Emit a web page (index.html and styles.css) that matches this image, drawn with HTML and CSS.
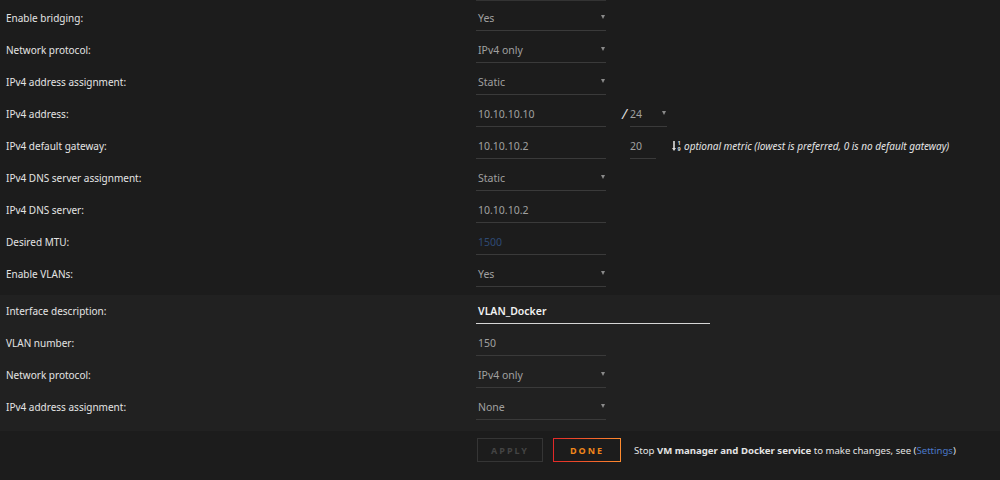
FILE: index.html
```html
<!DOCTYPE html>
<html lang="en">
<head>
    <meta charset="UTF-8">
    <title>Interface eth0</title>
    <link rel="stylesheet" href="styles.css">
</head>
<body>
    <div class="cut-row">
        <div class="cut-line"></div>
    </div>

    <!-- Interface settings -->
    <div class="section">
        <div class="row">
            <div class="label">Enable bridging:</div>
            <div class="field select">Yes</div>
        </div>
        <div class="row">
            <div class="label">Network protocol:</div>
            <div class="field select">IPv4 only</div>
        </div>
        <div class="row">
            <div class="label">IPv4 address assignment:</div>
            <div class="field select">Static</div>
        </div>
        <div class="row">
            <div class="label">IPv4 address:</div>
            <div class="field">10.10.10.10</div>
            <span class="slash">/</span>
            <div class="field mask select">24</div>
        </div>
        <div class="row">
            <div class="label">IPv4 default gateway:</div>
            <div class="field">10.10.10.2</div>
            <div class="field metric">20</div>
            <div class="hint">
                <svg class="sort-icon" width="10" height="12" viewBox="0 0 10 12">
                    <path d="M2 1v8" stroke="#ddd" stroke-width="1.6"/>
                    <path d="M0 8h4l-2 3z" fill="#ddd"/>
                    <text x="5.5" y="5" font-size="5.5" font-weight="bold" fill="#ddd" font-family="Noto Sans">1</text>
                    <text x="5.5" y="11" font-size="5.5" font-weight="bold" fill="#ddd" font-family="Noto Sans">9</text>
                </svg>
                <i>optional metric (lowest is preferred, 0 is no default gateway)</i>
            </div>
        </div>
        <div class="row">
            <div class="label">IPv4 DNS server assignment:</div>
            <div class="field select">Static</div>
        </div>
        <div class="row">
            <div class="label">IPv4 DNS server:</div>
            <div class="field">10.10.10.2</div>
        </div>
        <div class="row">
            <div class="label">Desired MTU:</div>
            <div class="field placeholder">1500</div>
        </div>
        <div class="row">
            <div class="label">Enable VLANs:</div>
            <div class="field select">Yes</div>
        </div>
    </div>

    <!-- VLAN -->
    <div class="section vlan">
        <div class="row">
            <div class="label">Interface description:</div>
            <div class="field wide">VLAN_Docker</div>
        </div>
        <div class="row">
            <div class="label">VLAN number:</div>
            <div class="field">150</div>
        </div>
        <div class="row">
            <div class="label">Network protocol:</div>
            <div class="field select">IPv4 only</div>
        </div>
        <div class="row">
            <div class="label">IPv4 address assignment:</div>
            <div class="field select">None</div>
        </div>
    </div>

    <div class="actions">
        <button class="btn apply">APPLY</button>
        <button class="btn done">DONE</button>
        <span class="notice">Stop <b>VM manager and Docker service</b> to make changes, see (<a href="#">Settings</a>)</span>
    </div>
</body>
</html>
```

FILE: styles.css
```css
* {
    margin: 0;
    padding: 0;
    box-sizing: border-box;
}

body {
    font-family: "Noto Sans", "Open Sans", sans-serif;
    font-size: 10px;
    background: #1c1c1c;
    color: #e0e0e0;
    width: 1000px;
    height: 480px;
    overflow: hidden;
}

.cut-row {
    height: 2px;
    padding-left: 476px;
}

.cut-line {
    width: 130px;
    height: 1px;
    background: #333;
}

.section {
    padding-bottom: 5px;
}

.section.vlan {
    background: #212121;
    padding-bottom: 8px;
}

.row {
    display: flex;
    align-items: flex-start;
    height: 32px;
}

.label {
    width: 476px;
    padding-left: 6px;
    line-height: 32px;
    color: #e4e4e4;
}

.field {
    position: relative;
    width: 130px;
    height: 25px;
    margin-top: 4px;
    padding-left: 2px;
    line-height: 24px;
    font-size: 10.5px;
    border-bottom: 1px solid #3a3a3a;
    color: #a0a0a0;
}

.select::after {
    content: "";
    position: absolute;
    right: 1px;
    top: 9px;
    border-left: 2.5px solid transparent;
    border-right: 2.5px solid transparent;
    border-top: 4px solid #8a8a8a;
}

.slash {
    width: 24px;
    margin-top: 4px;
    padding-left: 16px;
    line-height: 24px;
    font-size: 14px;
    font-style: italic;
    color: #ddd;
}

.field.mask {
    width: 37px;
    padding-left: 0;
}

.field.metric {
    width: 26px;
    margin-left: 24px;
    padding-left: 0;
}

.hint {
    display: flex;
    align-items: center;
    margin-left: 16px;
    height: 32px;
    color: #e4e4e4;
}

.sort-icon {
    margin-right: 2px;
}

.placeholder {
    color: #2e4a74;
}

.field.wide {
    width: 234px;
    color: #f2f2f2;
    font-weight: 600;
    border-bottom-color: #d6d6d6;
}

.actions {
    display: flex;
    align-items: center;
    padding: 7px 0 0 477px;
}

.btn {
    height: 24px;
    background: transparent;
    font-family: inherit;
    font-size: 9px;
    font-weight: 700;
    letter-spacing: 2px;
}

.apply {
    width: 66px;
    border: 1px solid #353535;
    color: #444;
}

.done {
    width: 68px;
    margin-left: 10px;
    border: 1px solid transparent;
    background: linear-gradient(#1c1c1c, #1c1c1c) padding-box,
                linear-gradient(90deg, #e22828, #ff8c2f) border-box;
    color: #f0861a;
}

.notice {
    margin-left: 13px;
    font-size: 9.6px;
    white-space: nowrap;
    color: #e4e4e4;
}

.notice a {
    color: #4a78c8;
    text-decoration: none;
}
```
